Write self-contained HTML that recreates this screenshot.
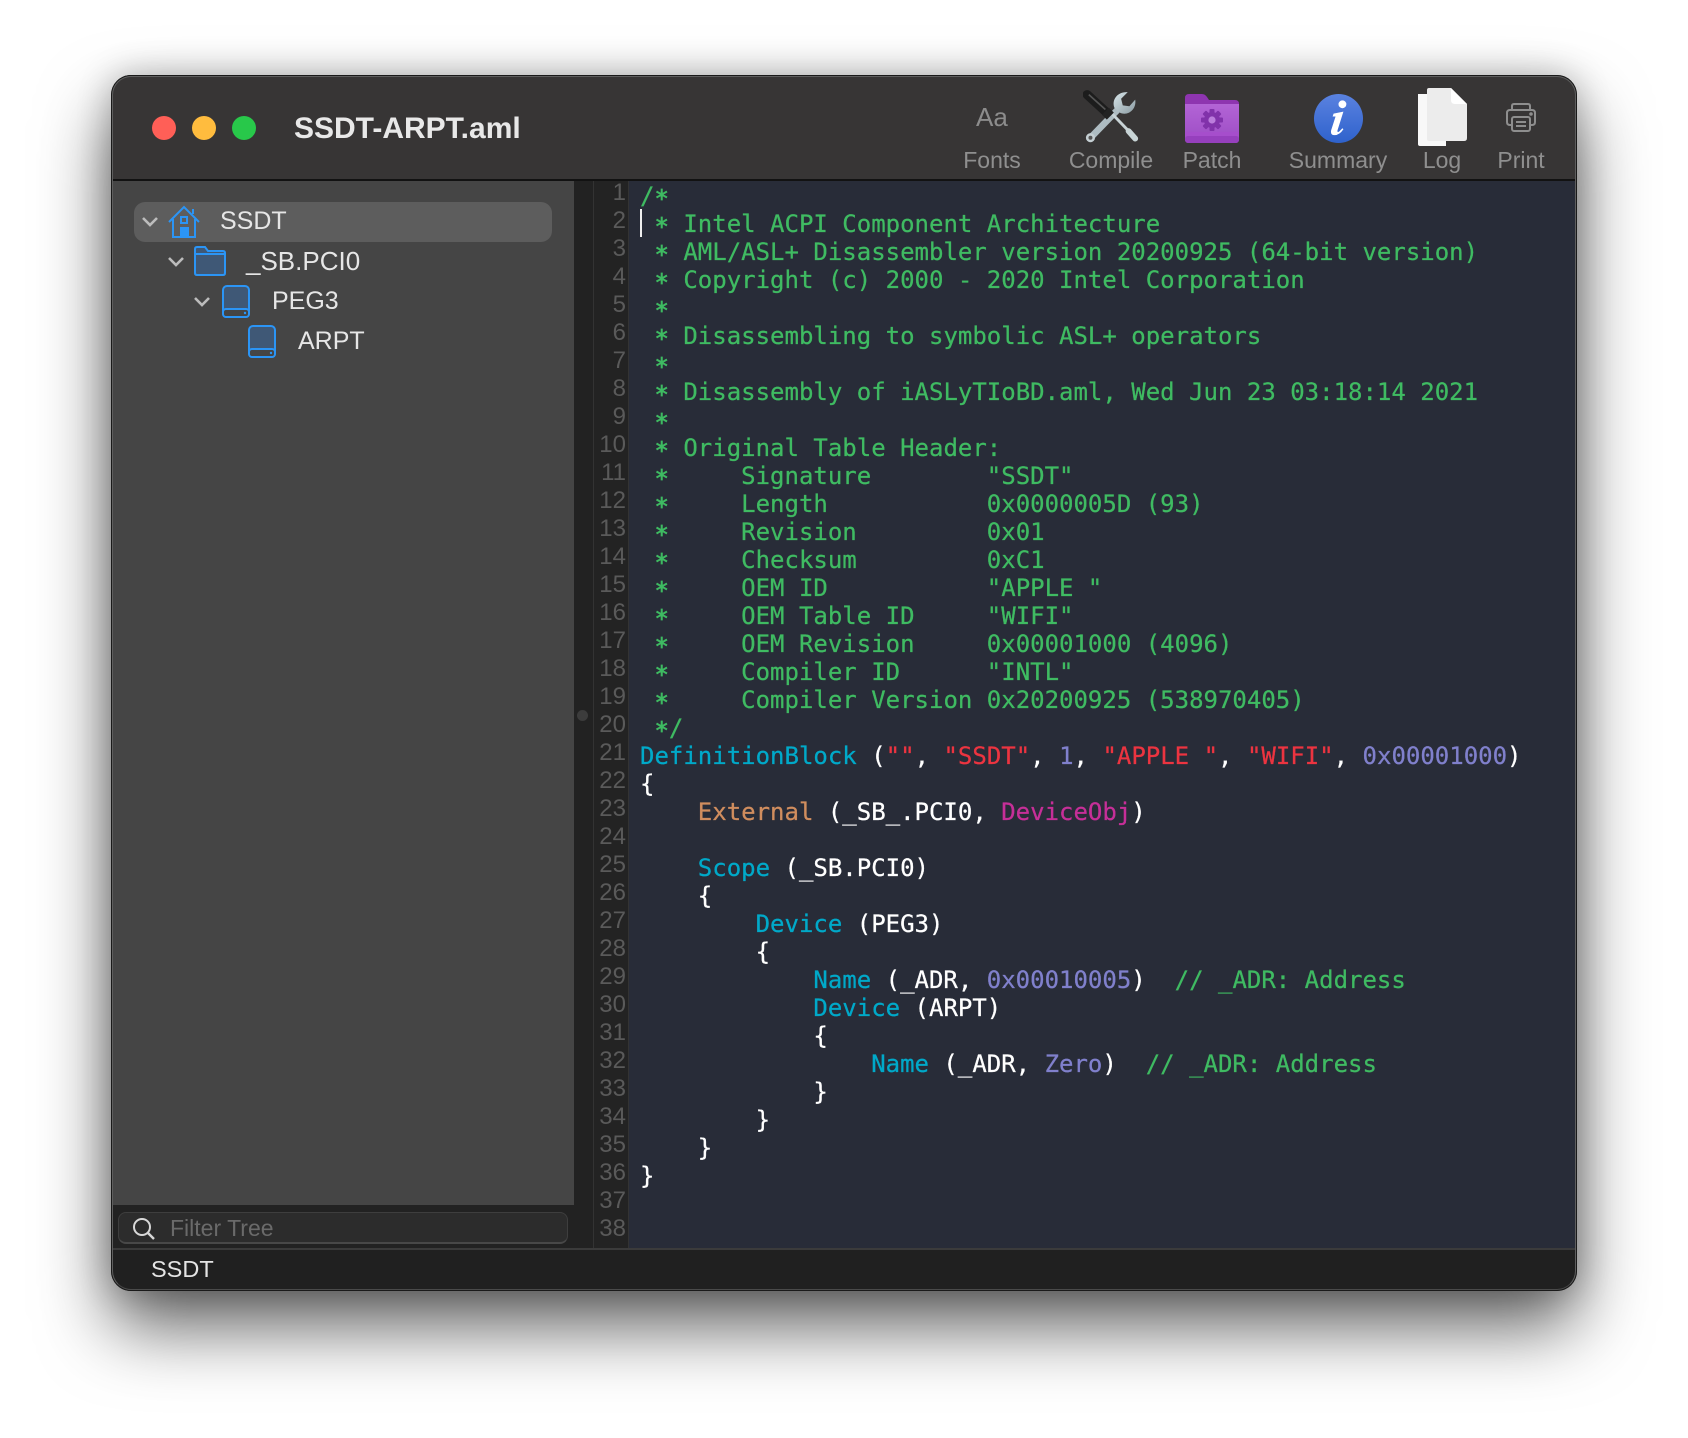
<!DOCTYPE html>
<html><head><meta charset="utf-8"><title>SSDT-ARPT.aml</title>
<style>
html,body{margin:0;padding:0;background:#fff;width:1688px;height:1438px;overflow:hidden}
*{box-sizing:border-box}
#page{position:relative;width:1688px;height:1438px;overflow:hidden;font-family:"Liberation Sans",sans-serif}
#win{position:absolute;left:111px;top:75px;width:1466px;height:1216px;border-radius:20px;background:#202020;box-shadow:0 36px 72px rgba(0,0,0,.62),0 0 34px rgba(0,0,0,.24)}
#inner{position:absolute;inset:0;border-radius:20px;overflow:hidden;border:1px solid #1a1a1a}
.abs{position:absolute}
#edge{position:absolute;inset:1px;border-radius:19px;border:1px solid #5e5e5e;border-bottom-color:#4a4a4a;pointer-events:none}
#bar{left:0;top:0;width:100%;height:105px;background:#373535;border-bottom:2px solid #121212}
.dot{position:absolute;width:24px;height:24px;border-radius:50%;top:40px}
#title{left:182px;top:35px;font-weight:bold;font-size:30px;line-height:36px;color:#e8e8e8;white-space:nowrap}
.tl{position:absolute;top:70px;font-size:23px;line-height:28px;color:#8f8f8f;transform:translateX(-50%);white-space:nowrap}
#side{left:0;top:105px;width:462px;height:1024px;background:#454545}
#sel{left:22px;top:126px;width:418px;height:40px;border-radius:11px;background:#5d5d5d}
.t{position:absolute;font-size:25px;line-height:32px;color:#e6e6e6;white-space:nowrap}
#split{left:462px;top:105px;width:20px;height:1067px;background:#222222;border-right:1px solid #333}
#gut{left:482px;top:105px;width:35px;height:1067px;background:#232323;border-right:1px solid #333}
#ed{left:517px;top:105px;width:949px;height:1067px;background:#282c38}
#nums{left:440px;top:103px;width:74px;font-size:24px;line-height:28px;color:#5a5a5a;text-align:right;white-space:pre}
#code{left:528px;top:106px;margin:0;font-family:"DejaVu Sans Mono","Liberation Mono",monospace;font-size:24px;line-height:28px;color:#fff;white-space:pre;-webkit-text-stroke:.25px currentColor}
.c{color:#3fbb62}.k{color:#00a9c9}.r{color:#ec3440}.n{color:#8080cc}.o{color:#d08d5e}.m{color:#c62f98}
.c i{font-style:normal;position:relative;top:3px;-webkit-text-stroke:.7px currentColor}
#caret{left:528px;top:133px;width:2px;height:28px;background:#eee}
#ftop{left:0;top:1129px;width:462px;height:45px;background:#222}
#fbox{left:6px;top:1136px;width:450px;height:32px;border-radius:8px;background:#2c2c2c;border:1px solid #3e3e3e;border-bottom:2px solid #484848}
#ftxt{left:58px;top:1136px;font-size:23px;line-height:32px;color:#6a6a6a}
#stat{left:0;top:1172px;width:100%;height:44px;background:#202020;border-top:2px solid #3b3b3b}
#stxt{left:39px;top:1175px;font-size:23.5px;line-height:36px;color:#e4e4e4}
</style></head><body><div id="page">
<div id="win"><div id="inner">
<div class="abs" id="bar"></div>
<div class="dot" style="left:40px;background:#ff5f57"></div>
<div class="dot" style="left:80px;background:#ffbc3e"></div>
<div class="dot" style="left:120px;background:#28c84a"></div>
<div class="abs" id="title">SSDT-ARPT.aml</div>

<div class="abs" style="left:864px;top:26px;font-size:26px;line-height:30px;color:#8c8c8c">Aa</div>

<svg class="abs" style="left:971px;top:13px" width="58" height="56" viewBox="0 0 70 66">
<defs><linearGradient id="st" x1="0" y1="0" x2="1" y2="1"><stop offset="0" stop-color="#d8e6ea"/><stop offset="1" stop-color="#8b9ba2"/></linearGradient></defs>
<path d="M10 57 L44 22" stroke="#aebcc2" stroke-width="8" stroke-linecap="round"/>
<circle cx="9" cy="58" r="5.5" fill="#c4ced2"/><circle cx="9" cy="58" r="2.4" fill="#555"/>
<path d="M38 22 C34 12 42 2 54 3 L46 11 L48 19 L56 20 L63 12 C65 24 54 32 45 28 Z" fill="url(#st)"/>
<path d="M33 27 L62 57" stroke="#c8d3d6" stroke-width="3.5"/>
<path d="M55 50 L63 59" stroke="#c8d4d6" stroke-width="7" stroke-linecap="round"/>
<path d="M5 6 L29 28" stroke="#1c1c1c" stroke-width="11" stroke-linecap="round"/>
<path d="M7 6 L27 24" stroke="#555" stroke-width="2"/>
<path d="M27 26 L33 32" stroke="#222" stroke-width="12"/>
</svg>

<svg class="abs" style="left:1073px;top:18px" width="54" height="50" viewBox="0 0 54 50">
<defs><linearGradient id="pf" x1="0" y1="0" x2="0" y2="1"><stop offset="0" stop-color="#b364d6"/><stop offset="1" stop-color="#9c4cc4"/></linearGradient></defs>
<path d="M0 4 Q0 0 4 0 H17 Q20 0 22 3 L24 6 H50 Q54 6 54 10 V20 H0 Z" fill="#8e35b0"/>
<path d="M0 10 H54 V45 Q54 49 50 49 H4 Q0 49 0 45 Z" fill="url(#pf)"/>
<rect x="0" y="38" width="54" height="4" fill="#a74ecd" opacity=".8"/>
<rect x="0" y="42" width="54" height="7" rx="3" fill="#9640bd"/>
<g transform="translate(27 26)" fill="#8132aa"><circle r="8"/>
<rect x="-2.5" y="-11" width="5" height="22" rx="1"/>
<rect x="-2.5" y="-11" width="5" height="22" rx="1" transform="rotate(45)"/>
<rect x="-2.5" y="-11" width="5" height="22" rx="1" transform="rotate(90)"/>
<rect x="-2.5" y="-11" width="5" height="22" rx="1" transform="rotate(135)"/>
<circle r="3.6" fill="#bb7ddc"/></g>
</svg>

<svg class="abs" style="left:1201px;top:17px" width="51" height="51" viewBox="0 0 52 52">
<defs><linearGradient id="ib" x1="0" y1="0" x2="0" y2="1"><stop offset="0" stop-color="#5a82e0"/><stop offset="1" stop-color="#2f62cc"/></linearGradient></defs>
<circle cx="26" cy="26" r="25" fill="url(#ib)"/>
<circle cx="30" cy="11.5" r="4" fill="#fff"/>
<path d="M21 21 L31 19 L25 38 Q24.5 41 27 39 L30 36 L31 37 Q27 43 22 43 Q17.500 43 18.500 38 L23 24 L20 24 Z" fill="#fff"/>
</svg>

<svg class="abs" style="left:1306px;top:12px" width="50" height="58" viewBox="0 0 50 58">
<path d="M0 6 H28 V58 H2 Q0 58 0 56 Z" fill="#f8f8f8"/>
<path d="M9 2 Q9 0 11 0 H33 L49 16 V50 Q49 53 46 53 H11 Q9 53 9 51 Z" fill="#ececec"/>
<path d="M33 0 L49 16 H37 Q33 16 33 12 Z" fill="#fff"/>
</svg>

<svg class="abs" style="left:1393px;top:26px" width="32" height="32" viewBox="0 0 32 32" fill="none" stroke="#8e8e8e" stroke-width="2">
<path d="M7 8 V4 Q7 2 9 2 H23 Q25 2 25 4 V8"/>
<path d="M7 23 H5 Q2 23 2 20 V11 Q2 8 5 8 H27 Q30 8 30 11 V20 Q30 23 27 23 H25"/>
<rect x="7" y="15" width="18" height="14" rx="2"/>
<path d="M11 20 H21 M11 24 H21"/>
<circle cx="26" cy="12" r=".8" fill="#8e8e8e"/>
</svg>

<div class="tl" style="left:880px">Fonts</div>
<div class="tl" style="left:999px">Compile</div>
<div class="tl" style="left:1100px">Patch</div>
<div class="tl" style="left:1226px">Summary</div>
<div class="tl" style="left:1330px">Log</div>
<div class="tl" style="left:1409px">Print</div>

<div class="abs" id="side"></div>
<div class="abs" id="sel"></div>

<svg class="abs" style="left:29px;top:136px" width="18" height="20" viewBox="0 0 18 20" fill="none" stroke="#bcbcbc" stroke-width="2.6"><path d="M2 6 L9 13 L16 6"/></svg>
<svg class="abs" style="left:56px;top:129px" width="32" height="34" viewBox="0 0 32 34" fill="none" stroke="#2b95f6" stroke-width="2">
<path d="M1 17 L16 2 L31 17"/><path d="M25 9 V4"/><path d="M5 14 V32 H27 V14"/>
<rect x="13" y="12" width="6" height="6"/><rect x="13" y="23" width="7" height="9" fill="#2b95f6"/></svg>
<div class="t" style="left:108px;top:129px">SSDT</div>

<svg class="abs" style="left:55px;top:176px" width="18" height="20" viewBox="0 0 18 20" fill="none" stroke="#bcbcbc" stroke-width="2.6"><path d="M2 6 L9 13 L16 6"/></svg>
<svg class="abs" style="left:82px;top:170px" width="32" height="30" viewBox="0 0 32 30"><path d="M1 3 Q1 1 3 1 H11 L14 5 H29 Q31 5 31 7 V27 Q31 29 29 29 H3 Q1 29 1 27 Z" fill="#3f5876" stroke="#2b95f6" stroke-width="2"/><path d="M1 8 H31" stroke="#2b95f6" stroke-width="2"/></svg>
<div class="t" style="left:134px;top:169px;font-size:26px">_SB.PCI0</div>

<svg class="abs" style="left:81px;top:216px" width="18" height="20" viewBox="0 0 18 20" fill="none" stroke="#bcbcbc" stroke-width="2.6"><path d="M2 6 L9 13 L16 6"/></svg>
<svg class="abs" style="left:110px;top:209px" width="28" height="33" viewBox="0 0 28 33"><rect x="1" y="1" width="26" height="31" rx="4" fill="#3f5876" stroke="#2b95f6" stroke-width="2"/><rect x="1" y="24" width="26" height="8" rx="3" fill="#454545" stroke="#2b95f6" stroke-width="2"/><circle cx="23" cy="28" r="1.2" fill="#2b95f6"/></svg>
<div class="t" style="left:160px;top:209px">PEG3</div>

<svg class="abs" style="left:136px;top:249px" width="28" height="33" viewBox="0 0 28 33"><rect x="1" y="1" width="26" height="31" rx="4" fill="#3f5876" stroke="#2b95f6" stroke-width="2"/><rect x="1" y="24" width="26" height="8" rx="3" fill="#454545" stroke="#2b95f6" stroke-width="2"/><circle cx="23" cy="28" r="1.2" fill="#2b95f6"/></svg>
<div class="t" style="left:186px;top:249px">ARPT</div>

<div class="abs" id="split"></div>
<div class="abs" style="left:465px;top:634px;width:11px;height:11px;border-radius:50%;background:#3c3c3c"></div>
<div class="abs" id="gut"></div>
<div class="abs" id="ed"></div>
<div class="abs" id="nums">1
2
3
4
5
6
7
8
9
10
11
12
13
14
15
16
17
18
19
20
21
22
23
24
25
26
27
28
29
30
31
32
33
34
35
36
37
38</div>
<div class="abs" id="caret"></div>
<pre class="abs" id="code"><span class="c">/<i>*</i>
 <i>*</i> Intel ACPI Component Architecture
 <i>*</i> AML/ASL+ Disassembler version 20200925 (64-bit version)
 <i>*</i> Copyright (c) 2000 - 2020 Intel Corporation
 <i>*</i>
 <i>*</i> Disassembling to symbolic ASL+ operators
 <i>*</i>
 <i>*</i> Disassembly of iASLyTIoBD.aml, Wed Jun 23 03:18:14 2021
 <i>*</i>
 <i>*</i> Original Table Header:
 <i>*</i>     Signature        "SSDT"
 <i>*</i>     Length           0x0000005D (93)
 <i>*</i>     Revision         0x01
 <i>*</i>     Checksum         0xC1
 <i>*</i>     OEM ID           "APPLE "
 <i>*</i>     OEM Table ID     "WIFI"
 <i>*</i>     OEM Revision     0x00001000 (4096)
 <i>*</i>     Compiler ID      "INTL"
 <i>*</i>     Compiler Version 0x20200925 (538970405)
 <i>*</i>/</span>
<span class="k">DefinitionBlock</span> (<span class="r">""</span>, <span class="r">"SSDT"</span>, <span class="n">1</span>, <span class="r">"APPLE "</span>, <span class="r">"WIFI"</span>, <span class="n">0x00001000</span>)
{
    <span class="o">External</span> (_SB_.PCI0, <span class="m">DeviceObj</span>)

    <span class="k">Scope</span> (_SB.PCI0)
    {
        <span class="k">Device</span> (PEG3)
        {
            <span class="k">Name</span> (_ADR, <span class="n">0x00010005</span>)  <span class="c">// _ADR: Address</span>
            <span class="k">Device</span> (ARPT)
            {
                <span class="k">Name</span> (_ADR, <span class="n">Zero</span>)  <span class="c">// _ADR: Address</span>
            }
        }
    }
}
</pre>

<div class="abs" id="ftop"></div>
<div class="abs" id="fbox"></div>
<svg class="abs" style="left:20px;top:1141px" width="24" height="24" viewBox="0 0 24 24" fill="none" stroke="#d8d8d8" stroke-width="2"><circle cx="10" cy="10" r="8"/><path d="M16 16 L22 22" stroke-width="2.4"/></svg>
<div class="abs" id="ftxt">Filter Tree</div>
<div class="abs" id="stat"></div>
<div class="abs" id="stxt">SSDT</div>
</div><div id="edge"></div></div>
</div></body></html>
